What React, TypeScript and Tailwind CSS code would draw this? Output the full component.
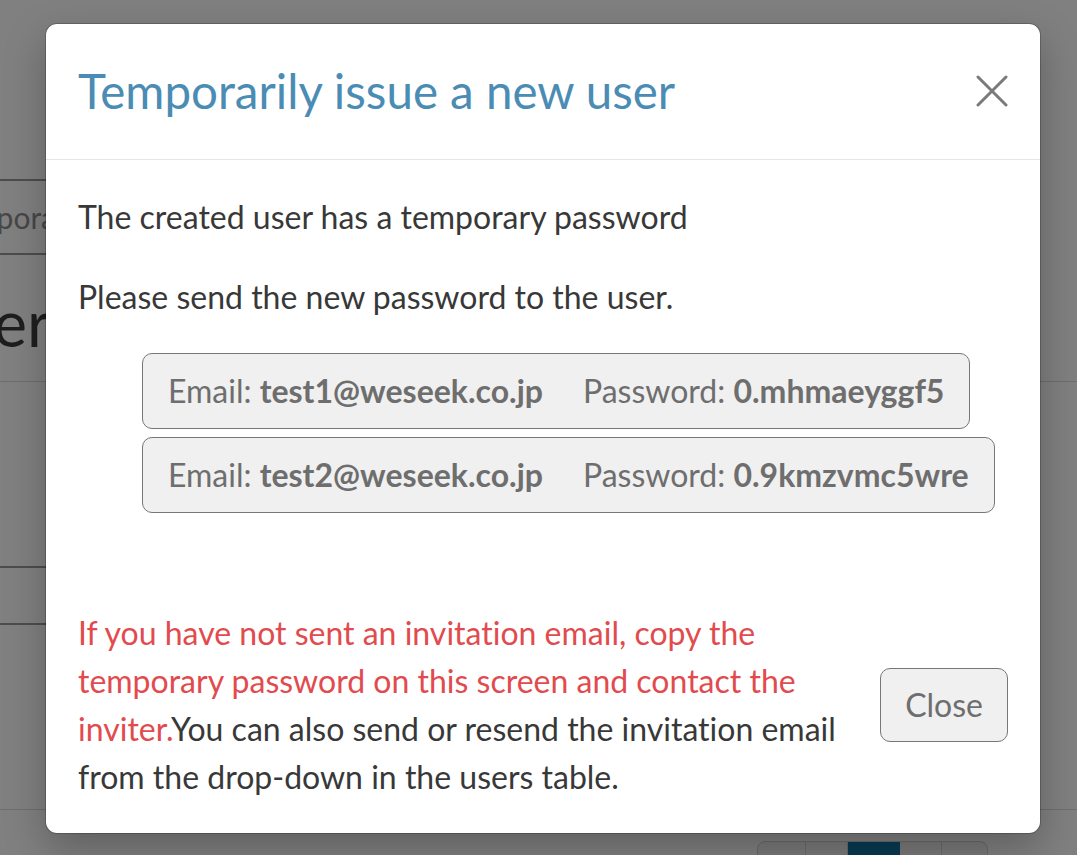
import React from "react";

const users = [
  { email: "test1@weseek.co.jp", password: "0.mhmaeyggf5" },
  { email: "test2@weseek.co.jp", password: "0.9kmzvmc5wre" },
];

function CloseIcon() {
  return (
    <svg width="32" height="32" viewBox="0 0 32 32" fill="none">
      <path d="M2 2L30 30M30 2L2 30" stroke="#7a7a7a" strokeWidth="3" strokeLinecap="round" />
    </svg>
  );
}

// the users page, seen through the backdrop
function PageBehind() {
  return (
    <div className="pt-[179px]">
      <div className="-ml-[58px] flex h-[76px] w-[560px] items-center border-y-2 border-[#4d4d4d] text-[30px] text-[#474747] whitespace-nowrap">
        Temporarily issue a new user
      </div>
      <div className="h-[127px] border-b border-[#6e6e6e] pt-[30px]">
        <div className="-ml-[80px] text-[64px] leading-[1.2] text-[#1e1e1e] whitespace-nowrap">User</div>
      </div>
      <div className="h-[186px] w-[600px] border-b-2 border-[#4d4d4d]" />
      <div className="h-[57px] w-[600px] border-b-2 border-[#4d4d4d]" />
      <div className="h-[185px] border-b border-[#6e6e6e]" />
      <div className="ml-[757px] mt-[31px] flex h-[40px] w-[231px] overflow-hidden rounded-[8px] border border-[#6a6a6a] bg-[#7a7a7a]">
        <div className="w-[48px] border-r border-[#6a6a6a]" />
        <div className="w-[42px] border-r border-[#6a6a6a]" />
        <div className="w-[52px] bg-[#083a52]" />
        <div className="w-[42px] border-r border-[#6a6a6a]" />
        <div className="flex-1" />
      </div>
    </div>
  );
}

export default function App() {
  return (
    <div className="relative h-[855px] w-[1077px] overflow-hidden bg-[#808080] font-['Lato',sans-serif] [font-variant-ligatures:none]">
      <PageBehind />

      <div className="absolute left-[45px] top-[23px] w-[996px] rounded-[12px] border border-black/20 bg-white bg-clip-padding shadow-[0_16px_40px_rgba(0,0,0,0.25)]">
        <div className="flex items-center justify-between border-b border-[#e6e6e6] px-8 pt-[31px] pb-8">
          <h5 className="text-[47.5px] leading-[72px] text-[#4a8cb4]">Temporarily issue a new user</h5>
          <button className="flex h-8 w-8 items-center justify-center">
            <CloseIcon />
          </button>
        </div>

        <div className="px-8 pt-[33px] pb-8 text-[32px] leading-[48px] text-[#383838]">
          <p className="mb-8">The created user has a temporary password</p>
          <p className="mb-8">Please send the new password to the user.</p>
          <ul className="mb-8 flex flex-col items-start gap-2 pl-16">
            {users.map((u) => (
              <li
                key={u.email}
                className="rounded-[10px] border border-[#777] bg-[#f0f0f0] px-[25px] py-[13px] text-[32px] leading-[48px] text-[#6e6e6e]"
              >
                Email: <b className="font-bold">{u.email}</b>
                <span className="ml-10">
                  Password: <b className="font-bold">{u.password}</b>
                </span>
              </li>
            ))}
          </ul>
        </div>

        <div className="flex items-center gap-6 px-8 pt-8 pb-8">
          <p className="flex-1 text-[32px] leading-[48px] text-[#383838]">
            <span className="text-[#e24b4e]">
              If you have not sent an invitation email, copy the temporary password on this screen and contact the inviter.
            </span>
            You can also send or resend the invitation email from the drop-down in the users table.
          </p>
          <button className="rounded-[10px] border border-[#777] bg-[#f0f0f0] px-6 py-3 text-[32px] leading-[48px] text-[#6e6e6e]">
            Close
          </button>
        </div>
      </div>
    </div>
  );
}
